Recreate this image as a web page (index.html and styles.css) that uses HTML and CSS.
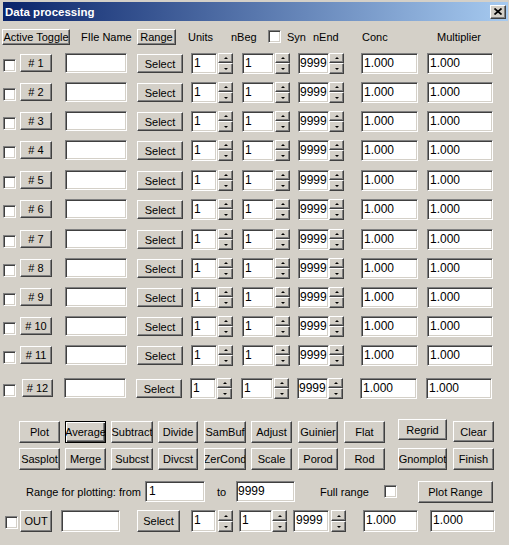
FILE: index.html
```html
<!DOCTYPE html>
<html>
<head>
<meta charset="utf-8">
<title>Data processing</title>
<link rel="stylesheet" href="styles.css">
</head>
<body>
<div class="titlebar">
  <span class="title">Data processing</span>
  <span class="btn close"><svg width="8" height="7" viewBox="0 0 8 7"><path d="M0.5 0.5 L7.5 6.5 M7.5 0.5 L0.5 6.5" stroke="#000" stroke-width="1.7" fill="none"/></svg></span>
</div>

<div class="hdr">
  <span class="btn h-at">Active Toggle</span>
  <span class="lbl h-fn">FIle Name</span>
  <span class="btn h-rg">Range</span>
  <span class="lbl h-u">Units</span>
  <span class="lbl h-nb">nBeg</span>
  <span class="cb"></span>
  <span class="lbl h-syn">Syn</span>
  <span class="lbl h-ne">nEnd</span>
  <span class="lbl h-conc">Conc</span>
  <span class="lbl">Multiplier</span>
</div>

<div class="row">
  <span class="cb c-cb"></span><span class="btn c-num"># 1</span><span class="edit c-fn"></span><span class="btn c-sel">Select</span>
  <span class="edit c-u">1</span><span class="spin s1"><span class="sb"><i class="up"></i></span><span class="sb"><i class="dn"></i></span></span>
  <span class="edit c-b">1</span><span class="spin s1"><span class="sb"><i class="up"></i></span><span class="sb"><i class="dn"></i></span></span>
  <span class="edit c-e">9999</span><span class="spin"><span class="sb"><i class="up"></i></span><span class="sb"><i class="dn"></i></span></span>
  <span class="edit c-conc">1.000</span><span class="edit c-mult">1.000</span>
</div>
<div class="row">
  <span class="cb c-cb"></span><span class="btn c-num"># 2</span><span class="edit c-fn"></span><span class="btn c-sel">Select</span>
  <span class="edit c-u">1</span><span class="spin s1"><span class="sb"><i class="up"></i></span><span class="sb"><i class="dn"></i></span></span>
  <span class="edit c-b">1</span><span class="spin s1"><span class="sb"><i class="up"></i></span><span class="sb"><i class="dn"></i></span></span>
  <span class="edit c-e">9999</span><span class="spin"><span class="sb"><i class="up"></i></span><span class="sb"><i class="dn"></i></span></span>
  <span class="edit c-conc">1.000</span><span class="edit c-mult">1.000</span>
</div>
<div class="row">
  <span class="cb c-cb"></span><span class="btn c-num"># 3</span><span class="edit c-fn"></span><span class="btn c-sel">Select</span>
  <span class="edit c-u">1</span><span class="spin s1"><span class="sb"><i class="up"></i></span><span class="sb"><i class="dn"></i></span></span>
  <span class="edit c-b">1</span><span class="spin s1"><span class="sb"><i class="up"></i></span><span class="sb"><i class="dn"></i></span></span>
  <span class="edit c-e">9999</span><span class="spin"><span class="sb"><i class="up"></i></span><span class="sb"><i class="dn"></i></span></span>
  <span class="edit c-conc">1.000</span><span class="edit c-mult">1.000</span>
</div>
<div class="row">
  <span class="cb c-cb"></span><span class="btn c-num"># 4</span><span class="edit c-fn"></span><span class="btn c-sel">Select</span>
  <span class="edit c-u">1</span><span class="spin s1"><span class="sb"><i class="up"></i></span><span class="sb"><i class="dn"></i></span></span>
  <span class="edit c-b">1</span><span class="spin s1"><span class="sb"><i class="up"></i></span><span class="sb"><i class="dn"></i></span></span>
  <span class="edit c-e">9999</span><span class="spin"><span class="sb"><i class="up"></i></span><span class="sb"><i class="dn"></i></span></span>
  <span class="edit c-conc">1.000</span><span class="edit c-mult">1.000</span>
</div>
<div class="row g9">
  <span class="cb c-cb"></span><span class="btn c-num"># 5</span><span class="edit c-fn"></span><span class="btn c-sel">Select</span>
  <span class="edit c-u">1</span><span class="spin s1"><span class="sb"><i class="up"></i></span><span class="sb"><i class="dn"></i></span></span>
  <span class="edit c-b">1</span><span class="spin s1"><span class="sb"><i class="up"></i></span><span class="sb"><i class="dn"></i></span></span>
  <span class="edit c-e">9999</span><span class="spin"><span class="sb"><i class="up"></i></span><span class="sb"><i class="dn"></i></span></span>
  <span class="edit c-conc">1.000</span><span class="edit c-mult">1.000</span>
</div>
<div class="row">
  <span class="cb c-cb"></span><span class="btn c-num"># 6</span><span class="edit c-fn"></span><span class="btn c-sel">Select</span>
  <span class="edit c-u">1</span><span class="spin s1"><span class="sb"><i class="up"></i></span><span class="sb"><i class="dn"></i></span></span>
  <span class="edit c-b">1</span><span class="spin s1"><span class="sb"><i class="up"></i></span><span class="sb"><i class="dn"></i></span></span>
  <span class="edit c-e">9999</span><span class="spin"><span class="sb"><i class="up"></i></span><span class="sb"><i class="dn"></i></span></span>
  <span class="edit c-conc">1.000</span><span class="edit c-mult">1.000</span>
</div>
<div class="row g9">
  <span class="cb c-cb"></span><span class="btn c-num"># 7</span><span class="edit c-fn"></span><span class="btn c-sel">Select</span>
  <span class="edit c-u">1</span><span class="spin s1"><span class="sb"><i class="up"></i></span><span class="sb"><i class="dn"></i></span></span>
  <span class="edit c-b">1</span><span class="spin s1"><span class="sb"><i class="up"></i></span><span class="sb"><i class="dn"></i></span></span>
  <span class="edit c-e">9999</span><span class="spin"><span class="sb"><i class="up"></i></span><span class="sb"><i class="dn"></i></span></span>
  <span class="edit c-conc">1.000</span><span class="edit c-mult">1.000</span>
</div>
<div class="row">
  <span class="cb c-cb"></span><span class="btn c-num"># 8</span><span class="edit c-fn"></span><span class="btn c-sel">Select</span>
  <span class="edit c-u">1</span><span class="spin s1"><span class="sb"><i class="up"></i></span><span class="sb"><i class="dn"></i></span></span>
  <span class="edit c-b">1</span><span class="spin s1"><span class="sb"><i class="up"></i></span><span class="sb"><i class="dn"></i></span></span>
  <span class="edit c-e">9999</span><span class="spin"><span class="sb"><i class="up"></i></span><span class="sb"><i class="dn"></i></span></span>
  <span class="edit c-conc">1.000</span><span class="edit c-mult">1.000</span>
</div>
<div class="row">
  <span class="cb c-cb"></span><span class="btn c-num"># 9</span><span class="edit c-fn"></span><span class="btn c-sel">Select</span>
  <span class="edit c-u">1</span><span class="spin s1"><span class="sb"><i class="up"></i></span><span class="sb"><i class="dn"></i></span></span>
  <span class="edit c-b">1</span><span class="spin s1"><span class="sb"><i class="up"></i></span><span class="sb"><i class="dn"></i></span></span>
  <span class="edit c-e">9999</span><span class="spin"><span class="sb"><i class="up"></i></span><span class="sb"><i class="dn"></i></span></span>
  <span class="edit c-conc">1.000</span><span class="edit c-mult">1.000</span>
</div>
<div class="row">
  <span class="cb c-cb"></span><span class="btn c-num"># 10</span><span class="edit c-fn"></span><span class="btn c-sel">Select</span>
  <span class="edit c-u">1</span><span class="spin s1"><span class="sb"><i class="up"></i></span><span class="sb"><i class="dn"></i></span></span>
  <span class="edit c-b">1</span><span class="spin s1"><span class="sb"><i class="up"></i></span><span class="sb"><i class="dn"></i></span></span>
  <span class="edit c-e">9999</span><span class="spin"><span class="sb"><i class="up"></i></span><span class="sb"><i class="dn"></i></span></span>
  <span class="edit c-conc">1.000</span><span class="edit c-mult">1.000</span>
</div>
<div class="row">
  <span class="cb c-cb"></span><span class="btn c-num"># 11</span><span class="edit c-fn"></span><span class="btn c-sel">Select</span>
  <span class="edit c-u">1</span><span class="spin s1"><span class="sb"><i class="up"></i></span><span class="sb"><i class="dn"></i></span></span>
  <span class="edit c-b">1</span><span class="spin s1"><span class="sb"><i class="up"></i></span><span class="sb"><i class="dn"></i></span></span>
  <span class="edit c-e">9999</span><span class="spin"><span class="sb"><i class="up"></i></span><span class="sb"><i class="dn"></i></span></span>
  <span class="edit c-conc">1.000</span><span class="edit c-mult">1.000</span>
</div>
<div class="row g12">
  <span class="cb c-cb"></span><span class="btn c-num n12"># 12</span><span class="edit c-fn"></span><span class="btn c-sel">Select</span>
  <span class="edit c-u">1</span><span class="spin s1"><span class="sb"><i class="up"></i></span><span class="sb"><i class="dn"></i></span></span>
  <span class="edit c-b">1</span><span class="spin s1"><span class="sb"><i class="up"></i></span><span class="sb"><i class="dn"></i></span></span>
  <span class="edit c-e">9999</span><span class="spin"><span class="sb"><i class="up"></i></span><span class="sb"><i class="dn"></i></span></span>
  <span class="edit c-conc">1.000</span><span class="edit c-mult">1.000</span>
</div>

<div class="brow ba">
  <span class="btn bb b1">Plot</span>
  <span class="btn bb b2 focus">Average</span>
  <span class="btn bb b3">Subtract</span>
  <span class="btn bb b4">Divide</span>
  <span class="btn bb b5">SamBuf</span>
  <span class="btn bb b6">Adjust</span>
  <span class="btn bb b7">Guinier</span>
  <span class="btn bb b8">Flat</span>
  <span class="btn bb b9 up2">Regrid</span>
  <span class="btn bb b10 short">Clear</span>
</div>
<div class="brow bbr">
  <span class="btn bb b1">Sasplot</span>
  <span class="btn bb b2">Merge</span>
  <span class="btn bb b3">Subcst</span>
  <span class="btn bb b4">Divcst</span>
  <span class="btn bb b5">ZerCond</span>
  <span class="btn bb b6">Scale</span>
  <span class="btn bb b7">Porod</span>
  <span class="btn bb b8">Rod</span>
  <span class="btn bb b9">Gnomplot</span>
  <span class="btn bb b10">Finish</span>
</div>

<div class="rrow">
  <span class="lbl r-l1">Range for plotting: from</span>
  <span class="edit r-e1">1</span>
  <span class="lbl r-l2">to</span>
  <span class="edit r-e2">9999</span>
  <span class="lbl r-l3">Full range</span>
  <span class="cb"></span>
  <span class="btn r-pr">Plot Range</span>
</div>

<div class="orow">
  <span class="cb o-cb"></span><span class="btn o-out">OUT</span><span class="edit o-fn"></span><span class="btn o-sel">Select</span>
  <span class="edit o-u">1</span><span class="spin o-s1"><span class="sb"><i class="up"></i></span><span class="sb"><i class="dn"></i></span></span>
  <span class="edit o-b">1</span><span class="spin"><span class="sb"><i class="up"></i></span><span class="sb"><i class="dn"></i></span></span>
  <span class="edit o-e">9999</span><span class="spin o-s3"><span class="sb"><i class="up"></i></span><span class="sb"><i class="dn"></i></span></span>
  <span class="edit o-conc">1.000</span><span class="edit o-mult">1.000</span>
</div>
</body>
</html>
```

FILE: styles.css
```css
* { box-sizing: border-box; }

body {
  margin: 0;
  width: 509px;
  height: 545px;
  overflow: hidden;
  background: #d4d0c8;
  font-family: "Liberation Sans", Arial, sans-serif;
  font-size: 11px;
  color: #000;
}

/* title bar */
.titlebar {
  margin: 2px 1px 0 3px;
  height: 19px;
  background: linear-gradient(to right, #0a246a, #a6caf0);
  display: flex;
  align-items: center;
  justify-content: space-between;
  padding: 0 2px 0 2px;
}
.title {
  color: #fff;
  font-weight: bold;
  font-size: 11.5px;
}
.close {
  width: 16px;
  height: 14px;
}

/* 3D controls */
.btn {
  flex: none;
  display: flex;
  align-items: center;
  justify-content: center;
  overflow: hidden;
  white-space: nowrap;
  background: #d4d0c8;
  border: 1px solid;
  border-color: #fff #404040 #404040 #fff;
  box-shadow: inset -1px -1px #808080;
}
.btn.focus {
  border-color: #000;
  box-shadow: inset 1px 1px #fff, inset -1px -1px #404040, inset -2px -2px #808080;
}
.edit {
  flex: none;
  display: block;
  height: 21px;
  background: #fff;
  border: 1px solid;
  border-color: #808080 #fff #fff #808080;
  box-shadow: inset 1px 1px #404040, inset -1px -1px #d4d0c8;
  padding: 2px 0 0 2px;
  font-size: 12px;
  line-height: 15px;
  white-space: nowrap;
  overflow: hidden;
}
.cb {
  flex: none;
  width: 13px;
  height: 13px;
  background: #fff;
  border: 1px solid;
  border-color: #808080 #fff #fff #808080;
  box-shadow: inset 1px 1px #404040, inset -1px -1px #d4d0c8;
}
.lbl {
  flex: none;
  white-space: nowrap;
}

/* spinner */
.spin {
  flex: none;
  width: 15px;
  height: 21px;
  display: flex;
  flex-direction: column;
}
.spin .sb {
  height: 10px;
  display: flex;
  align-items: center;
  justify-content: center;
  background: #d4d0c8;
  border: 1px solid;
  border-color: #fff #404040 #404040 #fff;
  box-shadow: inset -1px -1px #808080;
}
.spin .sb + .sb { height: 11px; }
.spin i {
  display: block;
  width: 0;
  height: 0;
  border-left: 2px solid transparent;
  border-right: 2px solid transparent;
}
.spin i.up { border-bottom: 2px solid #000; }
.spin i.dn { border-top: 2px solid #000; }

/* header */
.hdr {
  margin-top: 7px;
  height: 17px;
  display: flex;
  align-items: center;
}
.h-at { margin-left: 2px; width: 68px; height: 16px; }
.h-fn { margin-left: 11px; width: 56px; }
.h-rg { width: 39px; height: 16px; }
.h-u { margin-left: 12px; width: 43px; }
.h-nb { width: 37px; }
.h-syn { margin-left: 6px; width: 26px; }
.h-ne { width: 49px; }
.h-conc { width: 75px; }

/* data rows */
.row {
  margin-top: 8px;
  height: 21px;
  display: flex;
  align-items: flex-start;
}
.row.g9 { margin-top: 9px; }
.row.g12 { margin-top: 12px; }
.c-cb { margin-left: 3px; margin-top: 6px; }
.c-num { margin-left: 4px; width: 32px; height: 18px; margin-top: 1px; }
.c-num.n12 { margin-left: 6px; width: 31px; margin-right: -2px; }
.c-fn { margin-left: 13px; width: 62px; height: 20px; }
.c-sel { margin-left: 10px; width: 46px; height: 19px; margin-top: 1px; }
.c-u { margin-left: 8px; width: 26px; }
.s1 { margin-left: 1px; }
.c-b { margin-left: 9px; width: 32px; }
.c-e { margin-left: 8px; width: 31px; padding-left: 1px; }
.c-conc { margin-left: 17px; width: 57px; padding-left: 2px; }
.c-mult { margin-left: 9px; width: 66px; padding-left: 2px; }

/* button rows */
.brow {
  height: 22px;
  display: flex;
  align-items: flex-start;
}
.brow.ba { margin-top: 22px; }
.brow.bbr { margin-top: 5px; }
.bb { width: 41px; height: 22px; }
.b1 { margin-left: 19px; }
.b2 { margin-left: 5px; }
.b3 { margin-left: 5px; width: 42px; }
.b4 { margin-left: 5px; width: 40px; }
.b5 { margin-left: 6px; width: 42px; }
.b6 { margin-left: 5px; }
.b7 { margin-left: 6px; width: 40px; }
.b8 { margin-left: 6px; }
.b9 { margin-left: 13px; width: 49px; }
.b10 { margin-left: 6px; }
.up2 { margin-top: -2px; height: 21px; }
.short { height: 21px; }

/* range row */
.rrow {
  margin-top: 10px;
  height: 23px;
  display: flex;
  align-items: center;
}
.r-l1 { margin-left: 26px; width: 119px; }
.r-e1 { width: 60px; padding-left: 3px; }
.r-l2 { margin-left: 12px; width: 19px; }
.r-e2 { width: 59px; padding-left: 1px; }
.r-l3 { margin-left: 25px; width: 64px; }
.r-pr { margin-left: 21px; width: 75px; height: 22px; }

/* OUT row */
.orow {
  margin-top: 7px;
  height: 22px;
  display: flex;
  align-items: flex-start;
}
.orow .edit, .orow .spin { height: 22px; }
.orow .spin .sb { height: 11px; }
.o-cb { margin-left: 5px; margin-top: 6px; }
.o-out { margin-left: 2px; width: 32px; height: 22px; }
.o-fn { margin-left: 9px; width: 59px; }
.o-sel { margin-left: 17px; width: 43px; height: 22px; }
.o-u { margin-left: 11px; width: 25px; }
.o-s1 { margin-left: 2px; }
.o-b { margin-left: 6px; width: 33px; }
.o-e { margin-left: 6px; width: 36px; }
.o-s3 { margin-left: 2px; }
.o-conc { margin-left: 17px; width: 55px; padding-left: 2px; }
.o-mult { margin-left: 12px; width: 65px; padding-left: 2px; }
```
